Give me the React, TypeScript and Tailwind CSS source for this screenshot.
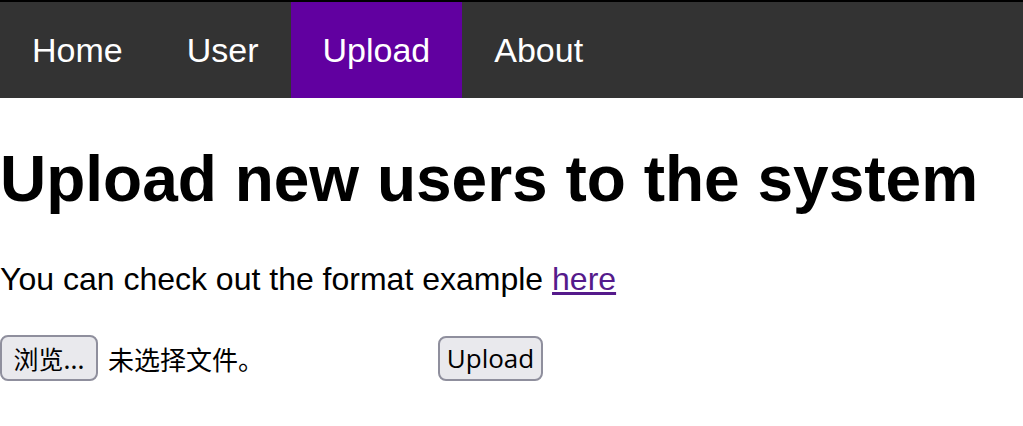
const links = [
  { label: 'Home', active: false },
  { label: 'User', active: false },
  { label: 'Upload', active: true },
  { label: 'About', active: false },
];

export default function App() {
  return (
    <div className="min-h-screen bg-white text-black font-['Liberation_Sans',Arial,sans-serif]">
      {/* top strip */}
      <div className="h-[2px] bg-black" />

      {/* Nav */}
      <nav className="flex bg-[#333333]">
        {links.map((link) => (
          <a
            key={link.label}
            href="#"
            className={`block px-8 pt-[29px] pb-[28px] text-[34px] leading-[39px] text-white ${
              link.active ? 'bg-[#6100a0]' : ''
            }`}
          >
            {link.label}
          </a>
        ))}
      </nav>

      <h1 className="mt-[44px] mb-[45px] text-[64px] leading-[74px] font-bold">
        Upload new users to the system
      </h1>

      <p className="text-[32px] leading-[37px]">
        You can check out the format example{' '}
        <a href="#" className="text-[#551a8b] underline">
          here
        </a>
      </p>

      <form className="mt-[37px] flex items-center font-['Open_Sans','Noto_Sans_CJK_SC',sans-serif] text-[26px]">
        <div className="flex w-[438px] items-center">
          <button
            type="button"
            className="h-[46px] w-[98px] rounded-lg border-2 border-[#8f8f9d] bg-[#e9e9ed] font-['Noto_Sans_CJK_SC',sans-serif] text-[25px] leading-none"
          >
            浏览...
          </button>
          <span className="ml-[10px] font-['Noto_Sans_CJK_SC',sans-serif] text-[26px]">未选择文件。</span>
        </div>
        <button
          type="button"
          className="h-[45px] w-[105px] rounded-lg border-2 border-[#8f8f9d] bg-[#e9e9ed] leading-none"
        >
          Upload
        </button>
      </form>
    </div>
  );
}
